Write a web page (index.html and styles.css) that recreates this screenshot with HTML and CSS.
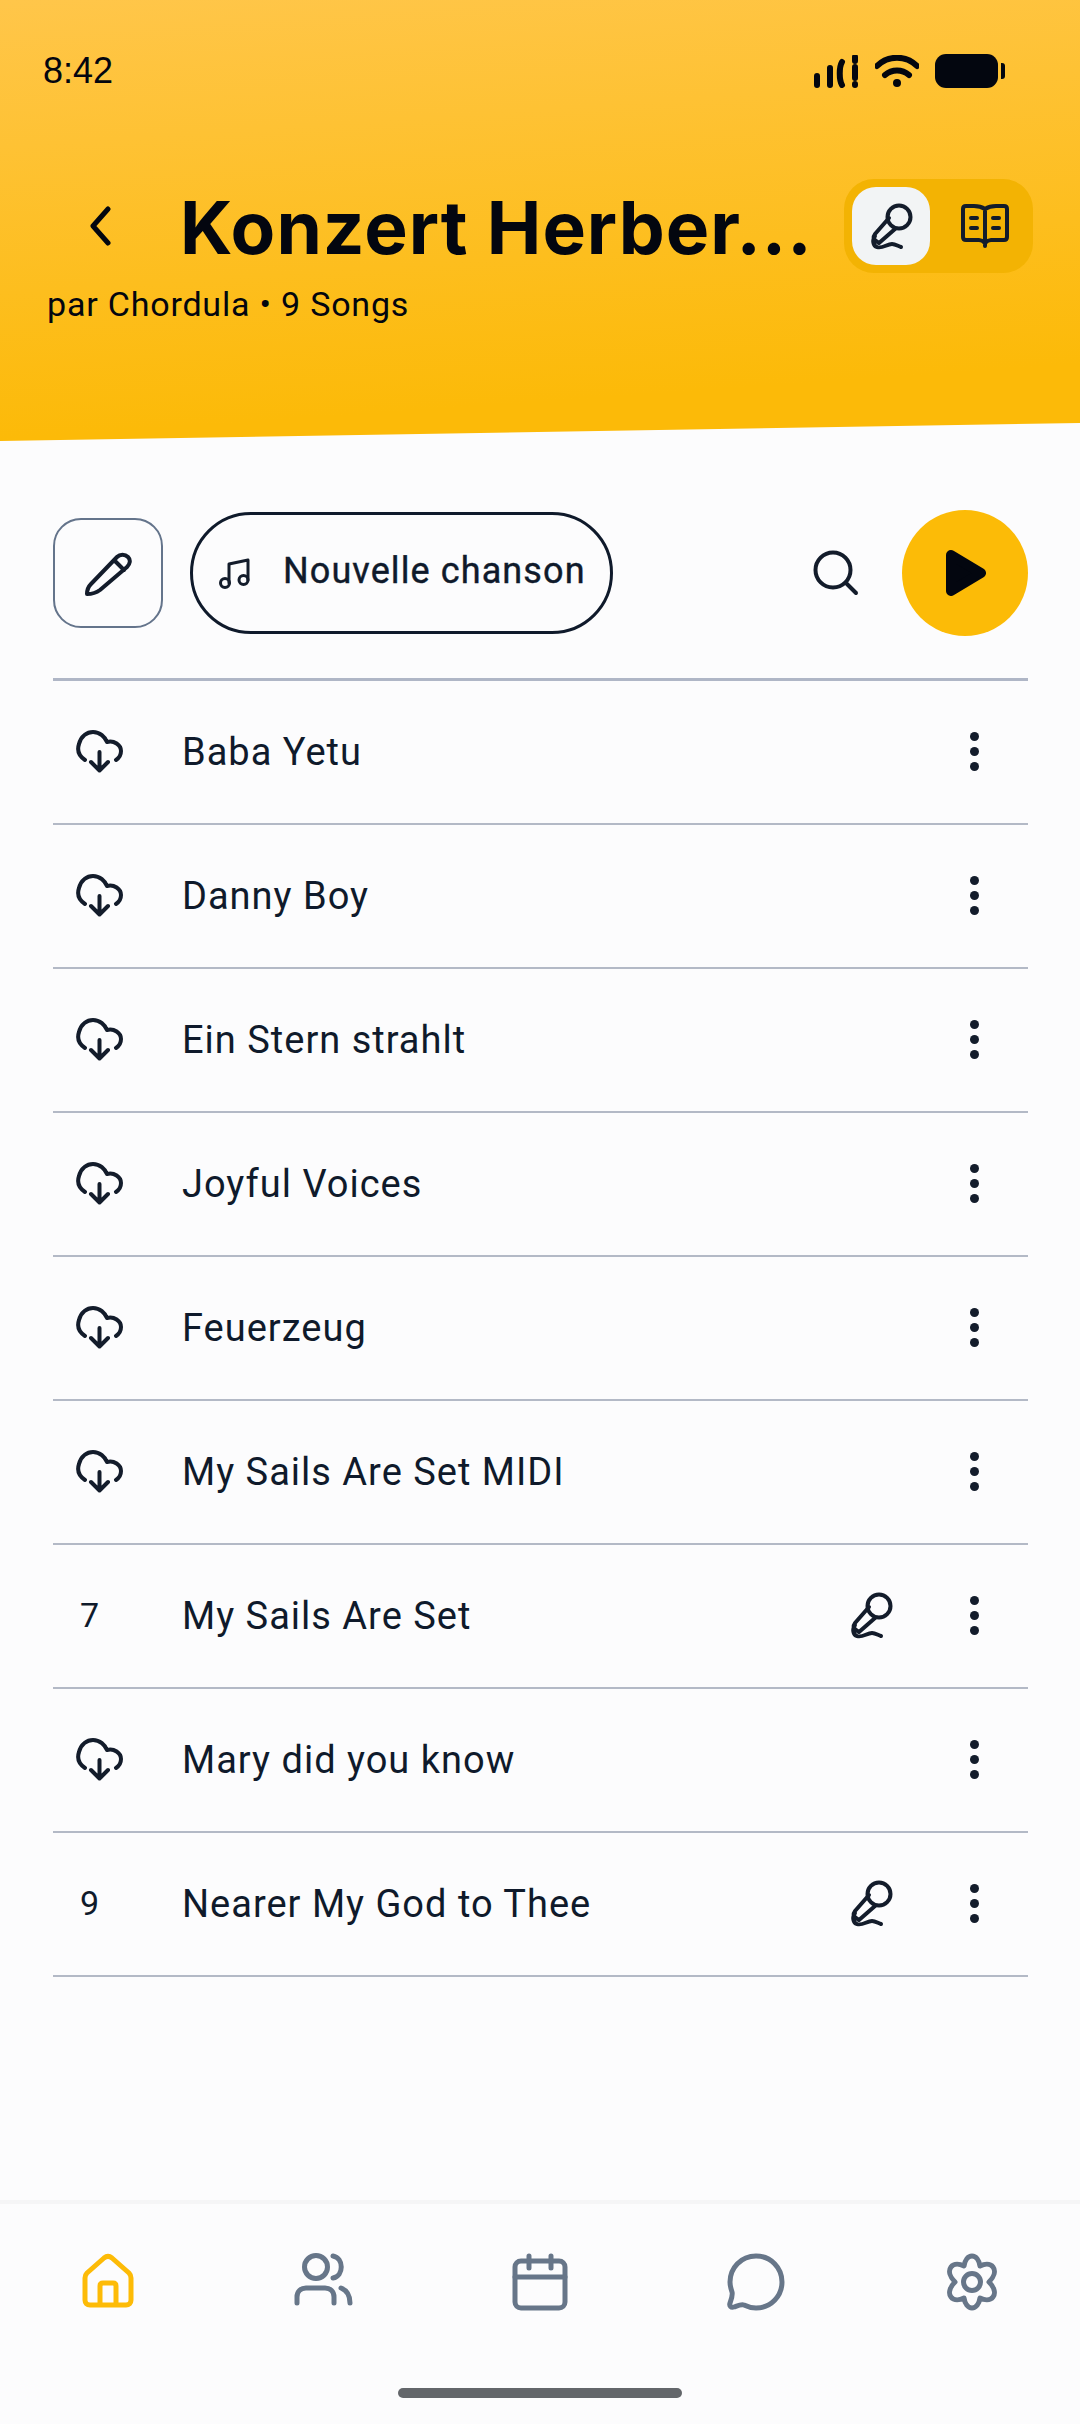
FILE: index.html
```html
<!DOCTYPE html>
<html lang="en">
<head>
  <meta charset="utf-8">
  <title>Konzert Herberge</title>
  <link rel="stylesheet" href="styles.css">
</head>
<body>
  <svg class="sprites" width="0" height="0">
    <symbol id="mic" viewBox="0 0 48 52">
      <circle cx="32" cy="17" r="11.5"/>
      <path d="M22 18 8 34C6 37 6 38 9 41L12 43 28 29M8 36C5 40 6 46 10 47 15 49 20 44 25 44 28 44 31 46 34 47"/>
    </symbol>
    <symbol id="cloud" viewBox="0 0 48 44">
      <path d="M9 31C3 27 1 21 3 15 5 7 11 3 17 3 24 3 29 8 31 13 38 11 45 16 45 22 45 26 43 29 40 31M23.500 23V40M15 33l8.500 8.500L32 33"/>
    </symbol>
  </svg>

  <header class="hero">
    <div class="status-bar">
      <span class="clock">8:42</span>
      <div class="status-icons">
        <svg class="signal" width="45" height="33" viewBox="0 0 45 33">
          <path d="M3 21v9M16 13v17M28 7C25 12 25 25 28 30M41 2v4M41 12v11M41 29v1"/>
        </svg>
        <svg class="wifi" width="44" height="33" viewBox="0 0 44 33">
          <path d="M2 11C13 0 31 0 42 11M10 20C17 14 27 14 34 20"/>
          <circle cx="22" cy="28" r="4"/>
        </svg>
        <div class="battery"><span class="battery-nub"></span></div>
      </div>
    </div>

    <div class="title-row">
      <button class="back" aria-label="back">
        <svg width="24" height="40" viewBox="0 0 24 40"><path d="M19 3 4 20l15 17"/></svg>
      </button>
      <h1>Konzert Herber...</h1>
      <div class="view-toggle">
        <span class="toggle-item active">
          <svg class="icon" width="48" height="52"><use href="#mic"/></svg>
        </span>
        <span class="toggle-item">
          <svg class="icon" width="50" height="46" viewBox="0 0 50 46">
            <path d="M25 6C22 4 18 3 14 3H6C4 3 3 4 3 6V34C3 36 4 37 6 37H19C21 37 23 38 25 40 27 38 29 37 31 37H44C46 37 47 36 47 34V6C47 4 46 3 44 3H36C32 3 28 4 25 6ZM25 6V43M11 15h6M11 25h6M33 15h6M33 25h6"/>
          </svg>
        </span>
      </div>
    </div>
    <p class="byline">par Chordula • 9 Songs</p>
  </header>

  <main>
    <div class="toolbar">
      <button class="edit-btn" aria-label="edit">
        <svg class="icon" width="48" height="48" viewBox="0 0 48 48">
          <path d="M3 45C3 41 5 37 7 35L33 8C36 5 41 5 44 8 47 11 46 15 43 18L16 41C12 44 7 45 3 45ZM30 11 40 21"/>
        </svg>
      </button>
      <button class="new-song">
        <svg class="icon thin" width="32" height="32" viewBox="0 0 32 32">
          <path d="M10 26V7L29 3V23"/>
          <circle cx="6" cy="26" r="4.500"/>
          <circle cx="24.500" cy="23" r="4.500"/>
        </svg>
        <span class="new-song-label">Nouvelle chanson</span>
      </button>
      <button class="search-btn" aria-label="search">
        <svg class="icon" width="46" height="46" viewBox="0 0 46 46">
          <circle cx="20" cy="20" r="17.500"/><path d="M33 33 43 43"/>
        </svg>
      </button>
      <button class="play-btn" aria-label="play">
        <svg width="40" height="46" viewBox="0 0 40 46"><path d="M5 5 35 23 5 41Z"/></svg>
      </button>
    </div>

    <ul class="songs">
      <li><span class="lead"><svg class="icon" width="48" height="44"><use href="#cloud"/></svg></span><span class="name">Baba Yetu</span><span class="more"><i></i><i></i><i></i></span></li>
      <li><span class="lead"><svg class="icon" width="48" height="44"><use href="#cloud"/></svg></span><span class="name">Danny Boy</span><span class="more"><i></i><i></i><i></i></span></li>
      <li><span class="lead"><svg class="icon" width="48" height="44"><use href="#cloud"/></svg></span><span class="name">Ein Stern strahlt</span><span class="more"><i></i><i></i><i></i></span></li>
      <li><span class="lead"><svg class="icon" width="48" height="44"><use href="#cloud"/></svg></span><span class="name">Joyful Voices</span><span class="more"><i></i><i></i><i></i></span></li>
      <li><span class="lead"><svg class="icon" width="48" height="44"><use href="#cloud"/></svg></span><span class="name">Feuerzeug</span><span class="more"><i></i><i></i><i></i></span></li>
      <li><span class="lead"><svg class="icon" width="48" height="44"><use href="#cloud"/></svg></span><span class="name">My Sails Are Set MIDI</span><span class="more"><i></i><i></i><i></i></span></li>
      <li><span class="lead num">7</span><span class="name">My Sails Are Set</span><svg class="icon row-mic" width="48" height="52"><use href="#mic"/></svg><span class="more"><i></i><i></i><i></i></span></li>
      <li><span class="lead"><svg class="icon" width="48" height="44"><use href="#cloud"/></svg></span><span class="name">Mary did you know</span><span class="more"><i></i><i></i><i></i></span></li>
      <li><span class="lead num">9</span><span class="name">Nearer My God to Thee</span><svg class="icon row-mic" width="48" height="52"><use href="#mic"/></svg><span class="more"><i></i><i></i><i></i></span></li>
    </ul>
  </main>

  <nav class="tabbar">
    <div class="tabs">
      <a class="tab current"><svg width="52" height="56" viewBox="0 0 52 56">
        <path d="M3 25C3 23 4 21 5 20L22 5C24.500 3 27.500 3 30 5L47 20C48 21 49 23 49 25V47C49 50 47 52 44 52H8C5 52 3 50 3 47ZM18 52V33C18 31 19 30 21 30H31C33 30 34 31 34 33V52"/>
      </svg></a>
      <a class="tab"><svg width="60" height="54" viewBox="0 0 60 54">
        <circle cx="22" cy="14" r="11.500"/>
        <path d="M39 3C50 5 50 23 39 25M3 50V44C3 38 7 35 12 35H31C36 35 40 38 40 44V50M47 35C52 37 56 41 56 50"/>
      </svg></a>
      <a class="tab"><svg width="56" height="58" viewBox="0 0 56 58">
        <rect x="3" y="8" width="50" height="47" rx="6"/>
        <path d="M3 24H53M17 3V15M39 3V15"/>
      </svg></a>
      <a class="tab"><svg width="58" height="60" viewBox="0 0 58 60">
        <path d="M29 3C14 3 3 15 3 29 3 33 4 36 5 39 6 42 4 47 3 50 2 53 4 55 7 54 10 53 14 51 17 52 21 54 25 55 29 55 44 55 55 43 55 29 55 15 44 3 29 3Z"/>
      </svg></a>
      <a class="tab"><svg width="54" height="58" viewBox="0 0 54 58">
        <circle cx="27" cy="29" r="8.500"/>
        <path d="M19 13C20 7 23 3 27 3 31 3 34 7 35 13 39 11 45 10 48 14 51 18 49 24 44 29 49 34 51 40 48 44 45 48 39 47 35 45 34 51 31 55 27 55 23 55 20 51 19 45 15 47 9 48 6 44 3 40 5 34 10 29 5 24 3 18 6 14 9 10 15 11 19 13Z"/>
      </svg></a>
    </div>
    <div class="home-bar"></div>
  </nav>
</body>
</html>
```

FILE: styles.css
```css
* {
  box-sizing: border-box;
}

html, body {
  margin: 0;
  height: 2424px;
}

body {
  width: 1080px;
  display: flex;
  flex-direction: column;
  overflow: hidden;
  background-color: #fcfcfd;
  color: #0f1a2b;
  font-family: Roboto, sans-serif;
}

button {
  margin: 0;
  padding: 0;
  border: 0;
  background: none;
  color: inherit;
  font: inherit;
  display: flex;
  align-items: center;
  justify-content: center;
}

.sprites {
  position: absolute;
}

.icon {
  fill: none;
  stroke: #131c2b;
  stroke-width: 4;
  stroke-linecap: round;
  stroke-linejoin: round;
}

.icon.thin {
  stroke-width: 3;
}

/* header */
.hero {
  height: 442px;
  flex: none;
  padding: 52px 47px 0 47px;
  background: linear-gradient(176deg, #ffc64a 0%, #fcba08 85%);
  clip-path: polygon(0 0, 100% 0, 100% 423px, 0 441px);
  color: #03060f;
}

.status-bar {
  height: 38px;
  display: flex;
  align-items: center;
  justify-content: space-between;
  margin-left: -4px;
  margin-right: 35px;
}

.clock {
  font-family: "Liberation Sans", sans-serif;
  font-size: 36px;
}

.status-icons {
  display: flex;
  align-items: center;
  gap: 16px;
}

.signal, .wifi {
  fill: none;
  stroke: #03060f;
  stroke-width: 6;
  stroke-linecap: round;
}

.wifi circle {
  fill: #03060f;
  stroke: none;
}

.battery {
  width: 63px;
  height: 34px;
  border-radius: 11px;
  background-color: #03060f;
  position: relative;
}

.battery-nub {
  position: absolute;
  left: 66px;
  top: 9px;
  width: 4px;
  height: 16px;
  border-radius: 0 3px 3px 0;
  background-color: #03060f;
}

.title-row {
  display: flex;
  align-items: center;
  margin-top: 89px;
}

.back {
  width: 133px;
  padding-right: 25px;
  flex: none;
  fill: none;
  stroke: #03060f;
  stroke-width: 5;
  stroke-linecap: round;
  stroke-linejoin: round;
}

h1 {
  margin: 0;
  padding-top: 2px;
  flex: 1;
  font-family: Inter, sans-serif;
  font-size: 73px;
  font-weight: 700;
  letter-spacing: 1px;
  white-space: nowrap;
}

.view-toggle {
  width: 189px;
  height: 94px;
  flex: none;
  padding: 8px;
  display: flex;
  border-radius: 30px;
  background-color: #f3b303;
}

.toggle-item {
  width: 78px;
  height: 78px;
  display: flex;
  align-items: center;
  justify-content: center;
  border-radius: 24px;
}

.toggle-item + .toggle-item {
  margin-left: 16px;
}

.toggle-item.active {
  background-color: #f2f4f5;
}

.byline {
  margin: 11px 0 0;
  font-size: 34px;
  letter-spacing: 0.8px;
}

/* toolbar and list */
main {
  flex: 1;
  padding: 68px 52px 0 53px;
}

.toolbar {
  height: 126px;
  display: flex;
  align-items: center;
}

.edit-btn {
  width: 110px;
  height: 110px;
  border: 2.5px solid #64748b;
  border-radius: 28px;
}

.new-song {
  width: 423px;
  height: 122px;
  margin-left: 27px;
  padding-left: 26px;
  justify-content: flex-start;
  gap: 32px;
  border: 3px solid #0f1a2b;
  border-radius: 61px;
  font-size: 36px;
  letter-spacing: 1.1px;
}

.new-song-label {
  padding-bottom: 5px;
  font-weight: 400;
  -webkit-text-stroke: 0.4px #0f1a2b;
}

.search-btn {
  margin-left: auto;
  margin-right: 43px;
}

.play-btn {
  width: 126px;
  height: 126px;
  padding-left: 2px;
  border-radius: 50%;
  background-color: #fcbb07;
  fill: #03060f;
  stroke: #03060f;
  stroke-width: 10;
  stroke-linejoin: round;
}

.songs {
  list-style: none;
  margin: 42px 0 0;
  padding: 0;
  border-top: 3px solid #afb6c6;
}

.songs li {
  height: 144px;
  padding-bottom: 2px;
  display: flex;
  align-items: center;
  border-bottom: 2px solid #b3b9c6;
  font-size: 38px;
  letter-spacing: 1px;
}

.lead {
  width: 129px;
  flex: none;
  padding-left: 23px;
  display: flex;
  align-items: center;
}

.lead.num {
  padding-left: 27px;
  font-size: 34px;
  letter-spacing: 0;
}

.name {
  flex: 1;
  padding-top: 2px;
}

.row-mic {
  margin-right: 75px;
}

.more {
  width: 9px;
  margin-right: 49px;
  display: flex;
  flex-direction: column;
  gap: 6px;
}

.more i {
  width: 9px;
  height: 9px;
  border-radius: 50%;
  background-color: #131c2b;
}

/* bottom bar */
.tabbar {
  height: 224px;
  flex: none;
  border-top: 4px solid #f5f5f6;
  position: relative;
}

.tabs {
  display: grid;
  grid-template-columns: repeat(5, 216px);
  padding-top: 49px;
}

.tab {
  display: flex;
  justify-content: center;
  fill: none;
  stroke: #677689;
  stroke-width: 5;
  stroke-linecap: round;
  stroke-linejoin: round;
}

.tab.current {
  stroke: #fdbb07;
}

.home-bar {
  position: absolute;
  left: 398px;
  bottom: 26px;
  width: 284px;
  height: 10px;
  border-radius: 5px;
  background-color: #63666a;
}
```
